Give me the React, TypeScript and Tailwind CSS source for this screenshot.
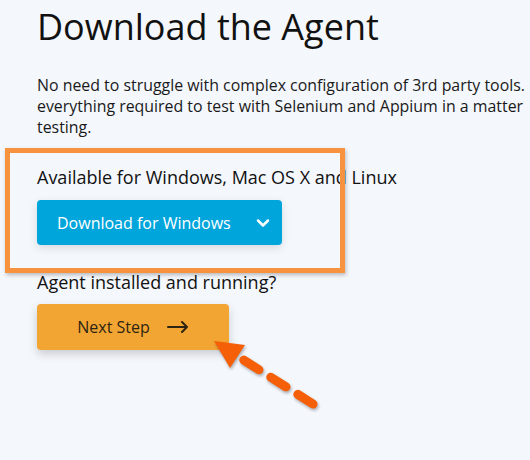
import { ChevronDown } from 'lucide-react';

export default function App() {
  return (
    <div
      className="relative w-[530px] h-[460px] overflow-hidden bg-[#f4f7fc] text-[#111]"
      style={{ fontFamily: '"Open Sans", sans-serif' }}
    >
      <div className="pl-[37px] pt-[2px]">
        <h1 className="text-[36px] leading-[50px] font-normal whitespace-nowrap">Download the Agent</h1>

        {/* Intro text */}
        <p className="mt-[23px] text-[15.9px] leading-[21px] text-[#1a1a1a] whitespace-nowrap">
          <span className="block">No need to struggle with complex configuration of 3rd party tools.</span>
          <span className="block">everything required to test with Selenium and Appium in a matter</span>
          <span className="block">testing.</span>
        </p>

        <div className="mt-[27px] text-[18px] leading-[24px] whitespace-nowrap">Available for Windows, Mac OS X and Linux</div>

        <button className="mt-[11px] flex items-center w-[245px] h-[45px] rounded-[4px] bg-[#00a5db] text-white shadow-[0_3px_8px_rgba(0,0,0,0.12)]">
          <span className="pl-[20px] text-[16px] flex-1 text-left">Download for Windows</span>
          <ChevronDown className="mr-[9px] w-[20px] h-[20px]" strokeWidth={3} />
        </button>

        <div className="mt-[25px] text-[18px] leading-[24px] whitespace-nowrap">Agent installed and running?</div>

        <button className="mt-[10px] flex items-center justify-center gap-[15px] w-[192px] h-[46px] rounded-[4px] bg-[#f2a533] text-[#2d2412] shadow-[0_4px_10px_rgba(0,0,0,0.18)]">
          <span className="text-[16px] pr-[2px]">Next Step</span>
          <svg width="22" height="12" viewBox="0 0 22 12" fill="none" stroke="#2d2412" strokeWidth="2" strokeLinecap="round" strokeLinejoin="round">
            <path d="M1 6h19M15 1l5 5-5 5" />
          </svg>
        </button>
      </div>

      {/* Highlight box annotation */}
      <div className="absolute left-[5px] top-[148px] w-[340px] h-[125px] border-[5px] border-[#f7933f] shadow-[1px_2px_4px_rgba(0,0,0,0.25)]" />

      {/* Dashed arrow annotation */}
      <svg className="absolute left-0 top-0" width="530" height="460" viewBox="0 0 530 460" style={{ filter: 'drop-shadow(1px 2px 1.5px rgba(0,0,0,0.3))' }}>
        <path d="M313 404 L231 352" stroke="#f55f07" strokeWidth="9" strokeLinecap="round" strokeDasharray="18 14" fill="none" />
        <path d="M214 341 L245 345 L230 368 Z" fill="#f55f07" />
      </svg>
    </div>
  );
}
